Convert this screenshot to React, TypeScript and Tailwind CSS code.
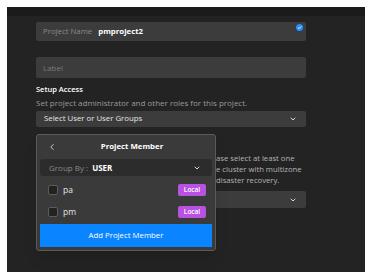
import { ChevronDown, ChevronLeft } from 'lucide-react';

const font = { fontFamily: '"Open Sans", "Noto Sans", sans-serif' };

function Row({ name }: { name: string }) {
  return (
    <div className="flex items-center h-[12px] pl-[8px] pr-[6px]">
      <span className="w-[10px] h-[10px] rounded-[2px] border border-[#5c5c5c] bg-[#222222]" />
      <span className="ml-[5px] text-[8.5px] text-[#e6e6e6] flex-1 leading-none">{name}</span>
      <span className="w-[28px] h-[12px] rounded-[2px] bg-[#b752e3] text-white text-[6.5px] font-semibold flex items-center justify-center">
        Local
      </span>
    </div>
  );
}

export default function App() {
  return (
    <div className="w-[373px] h-[280px] bg-white pt-[7px] pl-[7px] pr-[8px] pb-[8px]" style={font}>
      <div className="w-[358px] h-[265px] bg-[#232323] flex flex-col relative overflow-hidden">
        <div className="h-[9px] bg-[#1b1b1b]" />
        <div className="pl-[29px] w-[299px] flex flex-col">
          <div className="mt-[6px] h-[19px] rounded-[2px] bg-[#3c3c3c] flex items-center pl-[7px] relative">
            <span className="text-[7.8px] text-[#8a8a8a]">Project Name</span>
            <span className="ml-[6px] text-[7.8px] font-bold text-white">pmproject2</span>
            <svg className="absolute right-[3px] top-[2px]" width="7" height="7" viewBox="0 0 8 8">
              <circle cx="4" cy="4" r="4" fill="#1e8fff" />
              <path d="M2.2 4.1 L3.5 5.3 L5.9 2.8" stroke="#fff" strokeWidth="1.1" fill="none" />
            </svg>
          </div>
          <div className="mt-[16px] h-[21px] rounded-[2px] bg-[#3c3c3c] flex items-center pl-[7px]">
            <span className="text-[8px] text-[#7a7a7a]">Label</span>
          </div>
          <div className="mt-[6px] text-[7.5px] font-semibold text-white leading-[10px]">Setup Access</div>
          <div className="mt-[4px] text-[8px] text-[#9a9a9a] leading-[10px]">
            Set project administrator and other roles for this project.
          </div>
          <div className="mt-[3px] h-[16px] rounded-[2px] bg-[#3c3c3c] flex items-center pl-[8px] pr-[9px]">
            <span className="text-[7.8px] text-[#e6e6e6] flex-1">Select User or User Groups</span>
            <ChevronDown size={8} strokeWidth={3} color="#dcdcdc" />
          </div>
          <div className="mt-[26px] grid grid-cols-[180px_1fr] text-[7.7px] text-[#b5b5b5] leading-[11px]">
            <div>Cluster</div>
            <div>
              ase select at least one
              <br />e cluster with multizone
              <br />disaster recovery.
            </div>
          </div>
          <div className="mt-[5px] h-[17px] rounded-[2px] bg-[#3c3c3c] flex items-center justify-end pr-[9px]">
            <ChevronDown size={8} strokeWidth={3} color="#dcdcdc" />
          </div>
        </div>

        <div className="absolute left-[29px] top-[127px] w-[180px] h-[117px] rounded-[3px] border border-[#5a5a5a] bg-[#3a3a3a] shadow-lg flex flex-col px-[3px]">
          <div className="h-[24px] flex items-center relative">
            <ChevronLeft size={10} strokeWidth={2} color="#e0e0e0" className="ml-[7px]" />
            <span className="absolute left-[12px] right-0 text-center text-[7.8px] font-bold text-white">Project Member</span>
          </div>
          <div className="h-[17px] rounded-[3px] bg-[#2c2c2c] flex items-center pl-[9px] pr-[11px]">
            <span className="text-[8px] text-[#8a8a8a]">Group By :</span>
            <span className="ml-[4px] text-[8px] font-bold text-white flex-1">USER</span>
            <ChevronDown size={8} strokeWidth={3} color="#dcdcdc" />
          </div>
          <div className="mt-[8px] flex flex-col gap-[10px]">
            <Row name="pa" />
            <Row name="pm" />
          </div>
          <div className="mt-[6px] h-[23px] bg-[#0a84ff] flex items-center justify-center text-[7.8px] text-white">
            Add Project Member
          </div>
        </div>
      </div>
    </div>
  );
}
